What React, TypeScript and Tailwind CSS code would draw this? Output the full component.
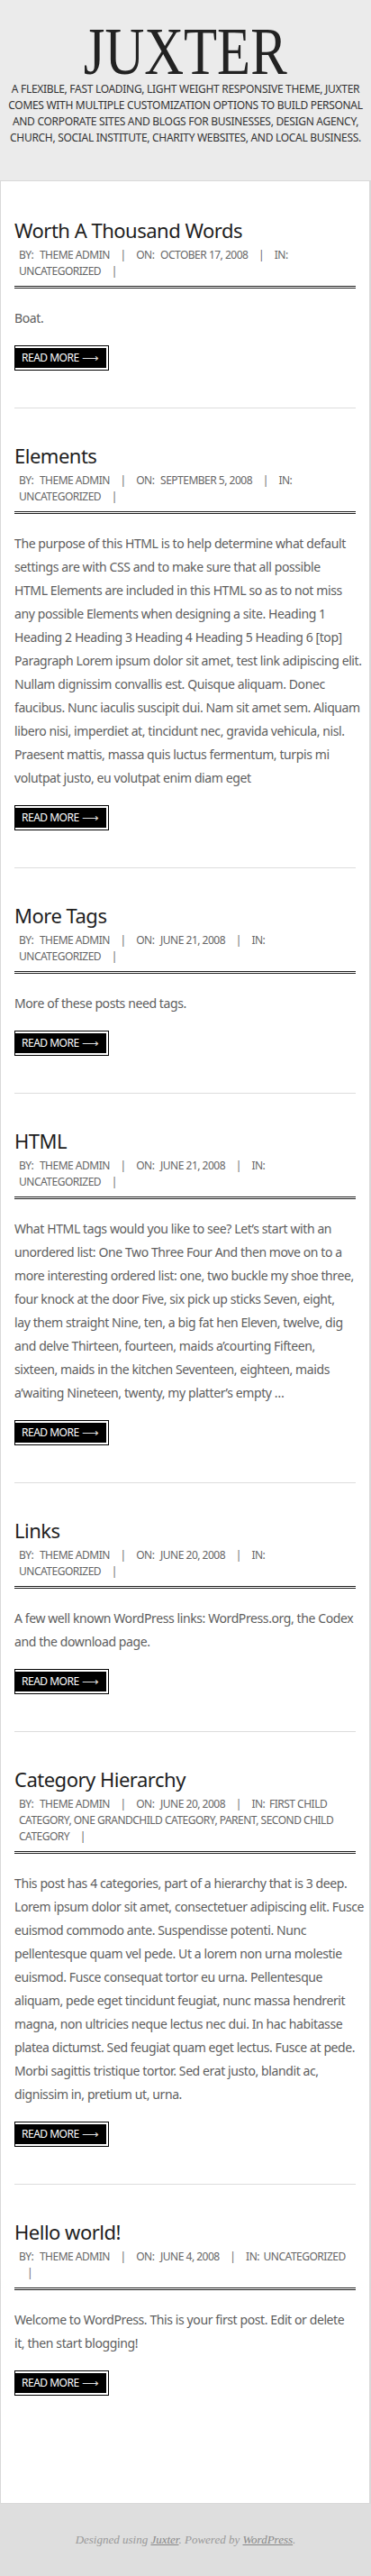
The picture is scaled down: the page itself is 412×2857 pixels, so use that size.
const posts = [
  {
    title: "Worth A Thousand Words",
    date: "October 17, 2008",
    cats: "Uncategorized",
    lines: ["Boat."],
  },
  {
    title: "Elements",
    date: "September 5, 2008",
    cats: "Uncategorized",
    lines: [
      "The purpose of this HTML is to help determine what default",
      "settings are with CSS and to make sure that all possible",
      "HTML Elements are included in this HTML so as to not miss",
      "any possible Elements when designing a site. Heading 1",
      "Heading 2 Heading 3 Heading 4 Heading 5 Heading 6 [top]",
      "Paragraph Lorem ipsum dolor sit amet, test link adipiscing elit.",
      "Nullam dignissim convallis est. Quisque aliquam. Donec",
      "faucibus. Nunc iaculis suscipit dui. Nam sit amet sem. Aliquam",
      "libero nisi, imperdiet at, tincidunt nec, gravida vehicula, nisl.",
      "Praesent mattis, massa quis luctus fermentum, turpis mi",
      "volutpat justo, eu volutpat enim diam eget",
    ],
  },
  {
    title: "More Tags",
    date: "June 21, 2008",
    cats: "Uncategorized",
    lines: ["More of these posts need tags."],
  },
  {
    title: "HTML",
    date: "June 21, 2008",
    cats: "Uncategorized",
    lines: [
      "What HTML tags would you like to see? Let\u2019s start with an",
      "unordered list: One Two Three Four And then move on to a",
      "more interesting ordered list: one, two buckle my shoe three,",
      "four knock at the door Five, six pick up sticks Seven, eight,",
      "lay them straight Nine, ten, a big fat hen Eleven, twelve, dig",
      "and delve Thirteen, fourteen, maids a\u2019courting Fifteen,",
      "sixteen, maids in the kitchen Seventeen, eighteen, maids",
      "a\u2019waiting Nineteen, twenty, my platter\u2019s empty \u2026",
    ],
  },
  {
    title: "Links",
    date: "June 20, 2008",
    cats: "Uncategorized",
    lines: [
      "A few well known WordPress links: WordPress.org, the Codex",
      "and the download page.",
    ],
  },
  {
    title: "Category Hierarchy",
    date: "June 20, 2008",
    cats: "First Child Category, One Grandchild Category, Parent, Second Child Category",
    lines: [
      "This post has 4 categories, part of a hierarchy that is 3 deep.",
      "Lorem ipsum dolor sit amet, consectetuer adipiscing elit. Fusce",
      "euismod commodo ante. Suspendisse potenti. Nunc",
      "pellentesque quam vel pede. Ut a lorem non urna molestie",
      "euismod. Fusce consequat tortor eu urna. Pellentesque",
      "aliquam, pede eget tincidunt feugiat, nunc massa hendrerit",
      "magna, non ultricies neque lectus nec dui. In hac habitasse",
      "platea dictumst. Sed feugiat quam eget lectus. Fusce at pede.",
      "Morbi sagittis tristique tortor. Sed erat justo, blandit ac,",
      "dignissim in, pretium ut, urna.",
    ],
  },
  {
    title: "Hello world!",
    date: "June 4, 2008",
    cats: "Uncategorized",
    oneLine: true,
    lines: [
      "Welcome to WordPress. This is your first post. Edit or delete",
      "it, then start blogging!",
    ],
  },
];

// the theme prints "BY: ... | ON: ... | IN: ... |" and lets it wrap
function Meta({ date, cats, oneLine }: { date: string; cats: string; oneLine?: boolean }) {
  return (
    <div className="mt-[4px] mr-[7px] pl-[5px] text-[12px] leading-[18px] tracking-[-0.5px] uppercase text-[#666]">
      <span className="pr-[4px]">By:</span> Theme Admin <span className="px-[9px]">|</span>{" "}
      <span className="pr-[4px]">On:</span> {date} <span className="px-[9px]">|</span>{" "}
      <span className="pr-[2px]">In:</span> {cats}
      {oneLine ? <br /> : " "}
      <span className="px-[9px]">|</span>
    </div>
  );
}

function ReadMore() {
  return (
    <div className="mt-[17px] inline-block border border-black bg-white pt-[2px] pr-[2px] pb-[2px]">
      <div className="flex h-[22px] items-center bg-black pl-[7px] pr-[9px] text-[12px] uppercase tracking-[-0.5px] text-white">
        <span>Read More</span>
        <span className="ml-[3px] text-[13px] leading-none text-[#ddd]">⟶</span>
      </div>
    </div>
  );
}

export default function App() {
  return (
    <div className="min-h-screen bg-[#ebebeb] font-['Noto_Sans',sans-serif]">
      {/* header */}
      <header className="pt-[20px] pb-[38px] text-center">
        <h1 className="font-['Liberation_Serif',serif] text-[74px] leading-[74px] text-[#222]">
          <span className="inline-block scale-x-[0.82]">JUXTER</span>
        </h1>
        <p className="-mt-[4px] text-[12px] leading-[18px] tracking-[-0.3px] uppercase text-[#333]">
          <span className="block whitespace-nowrap">A flexible, fast loading, light weight responsive theme, Juxter</span>
          <span className="block whitespace-nowrap">comes with multiple customization options to build personal</span>
          <span className="block whitespace-nowrap">and corporate sites and blogs for businesses, design agency,</span>
          <span className="block whitespace-nowrap">church, social institute, charity websites, and local business.</span>
        </p>
      </header>

      {/* posts */}
      <main className="border border-r-2 border-[#d9d9d9] bg-white px-[15px] pt-[2px] pb-[78px]">
        {posts.map((post, i) => (
          <article
            key={post.title}
            className={
              i < posts.length - 1
                ? "border-b border-[#dddddd] pt-[37px] pb-[41px]"
                : "pt-[37px] pb-[41px]"
            }
          >
            <h2 className="text-[22px] leading-[30px] tracking-[-0.5px] text-[#1e1e1e]">{post.title}</h2>
            <Meta date={post.date} cats={post.cats} oneLine={post.oneLine} />
            <div className="mt-[7px] border-b-[3px] border-double border-[#222]" />
            <div className="mt-[20px] text-[14px] leading-[26px] tracking-[-0.4px] text-[#5e5e5e]">
              {post.lines.map((line) => (
                <span key={line} className="block whitespace-nowrap">
                  {line}
                </span>
              ))}
            </div>
            <ReadMore />
          </article>
        ))}
      </main>

      {/* footer */}
      <footer className="flex h-[80px] items-center justify-center bg-[#dedede] font-['Liberation_Serif',serif] text-[13px] italic text-[#999]">
        <p>
          Designed using <a className="text-[#888] underline">Juxter</a>. Powered by{" "}
          <a className="text-[#888] underline">WordPress</a>.
        </p>
      </footer>
    </div>
  );
}
